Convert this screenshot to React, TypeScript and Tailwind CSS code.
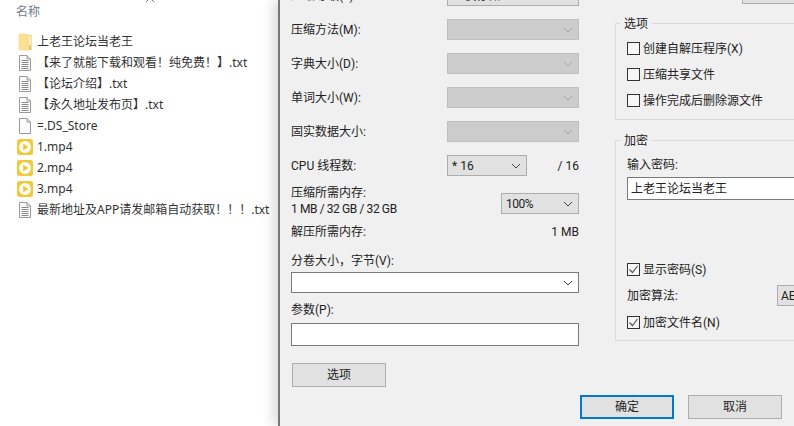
const files = [
  { name: '上老王论坛当老王', icon: 'folder' },
  { name: '【来了就能下载和观看！纯免费！】.txt', icon: 'text' },
  { name: '【论坛介绍】.txt', icon: 'text' },
  { name: '【永久地址发布页】.txt', icon: 'text' },
  { name: '=.DS_Store', icon: 'blank' },
  { name: '1.mp4', icon: 'video' },
  { name: '2.mp4', icon: 'video' },
  { name: '3.mp4', icon: 'video' },
  { name: '最新地址及APP请发邮箱自动获取！！！.txt', icon: 'text' },
]

function FileIcon({ type }: { type: string }) {
  if (type === 'folder') {
    return (
      <svg width="18" height="18" viewBox="0 0 18 18" className="shrink-0">
        <path d="M3 1h8l1 1v15H3z" fill="#ffe08f" stroke="#f3d98e" strokeWidth="0.6" />
        <path d="M12 2h3.5v15H12z" fill="#fbeab8" stroke="#f0d48a" strokeWidth="0.6" />
        <path d="M13 12h2v5h-2z" fill="#e9c566" />
      </svg>
    )
  }
  if (type === 'video') {
    return (
      <svg width="18" height="18" viewBox="0 0 18 18" className="shrink-0">
        <rect x="1" y="1" width="16" height="16" rx="2.5" fill="#edcb3c" />
        <circle cx="9" cy="9" r="6" fill="#fdfaf0" />
        <path d="M7.2 5.8v6.4L12.3 9z" fill="#edc62f" />
      </svg>
    )
  }
  return (
    <svg width="18" height="18" viewBox="0 0 18 18" className="shrink-0">
      <path d="M3.5 1.5h7.5l3.5 3.5v11.5h-11z" fill="#fbfbfb" stroke="#9a9a9a" />
      <path d="M11 1.5V5h3.5" fill="none" stroke="#9a9a9a" />
      {type === 'text' && (
        <path d="M5.5 6.5h7M5.5 8.5h7M5.5 10.5h7M5.5 12.5h7M5.5 14.5h7" stroke="#8a8a8a" />
      )}
    </svg>
  )
}

function Chevron({ color }: { color: string }) {
  return (
    <svg width="10" height="6" viewBox="0 0 10 6" className="shrink-0">
      <path d="M1 1l4 4 4-4" fill="none" stroke={color} strokeWidth="1" />
    </svg>
  )
}

function DisabledSelect() {
  return (
    <div className="flex h-[21px] w-[132px] items-center justify-end border border-[#bfbfbf] bg-[#cccccc] pr-[5px]">
      <Chevron color="#a3a3a3" />
    </div>
  )
}

function Row({ label, children }: { label: string; children: React.ReactNode }) {
  return (
    <div className="flex h-[21px] items-center justify-between">
      <span>{label}</span>
      {children}
    </div>
  )
}

function Checkbox({ label, checked }: { label: string; checked?: boolean }) {
  return (
    <div className="flex h-4 items-center gap-[3px]">
      <span className="flex h-[13px] w-[13px] items-center justify-center border border-[#333333] bg-[#f6f6f6]">
        {checked && (
          <svg width="11" height="11" viewBox="0 0 11 11">
            <path d="M1.5 5.5l3 3 5-6.5" fill="none" stroke="#555555" strokeWidth="1.2" />
          </svg>
        )}
      </span>
      <span className="pt-px">{label}</span>
    </div>
  )
}

export default function App() {
  return (
    <div className="flex h-[426px] w-[794px] overflow-hidden bg-white font-['Noto_Sans','Noto_Sans_CJK_SC',sans-serif] text-[12px] leading-4 text-[#222222]">
      {/* Explorer list */}
      <div className="relative w-[278px] shrink-0">
        <svg width="10" height="6" viewBox="0 0 10 6" className="absolute left-[145px] top-[-3px]">
          <path d="M1 5l4-4 4 4" fill="none" stroke="#7a7a7a" />
        </svg>
        <div className="pl-4 pt-[4px] text-[#6d7b8b]">名称</div>
        <div className="mt-[11px] flex flex-col">
          {files.map((file) => (
            <div key={file.name} className="flex h-[21px] items-center gap-[3px] pl-4 text-[#333333]">
              <FileIcon type={file.icon} />
              <span className="whitespace-nowrap">{file.name}</span>
            </div>
          ))}
        </div>
      </div>

      {/* Dialog */}
      <div className="relative flex w-[516px] shrink-0 flex-col border-l-2 border-[#777777] bg-[#f0f0f0] pl-[11px] pr-[12px] font-['Roboto','Noto_Sans_CJK_SC',sans-serif] shadow-[-6px_0_10px_rgba(0,0,0,0.12)]">
        <div className="flex h-[387px] gap-9">
          {/* Left column */}
          <div className="-mt-[15px] flex w-[288px] shrink-0 flex-col">
            <div className="flex flex-col gap-[13px]">
              <Row label="压缩等级(L):">
                <div className="flex h-[21px] w-[132px] items-center justify-between border border-[#adadad] bg-[#e1e1e1] pl-[7px] pr-[5px]">
                  <span>-&nbsp;&nbsp;仅存储</span>
                  <Chevron color="#a3a3a3" />
                </div>
              </Row>
              <Row label="压缩方法(M):"><DisabledSelect /></Row>
              <Row label="字典大小(D):"><DisabledSelect /></Row>
              <Row label="单词大小(W):"><DisabledSelect /></Row>
              <Row label="固实数据大小:"><DisabledSelect /></Row>
              <Row label="CPU 线程数:">
                <div className="flex w-[132px] items-center justify-between">
                  <div className="flex h-[21px] w-[80px] items-center justify-between border border-[#adadad] bg-[#e1e1e1] pl-[4px] pr-[5px]">
                    <span>* 16</span>
                    <Chevron color="#444444" />
                  </div>
                  <span>/ 16</span>
                </div>
              </Row>
            </div>
            <div className="mt-[9px] flex h-8 justify-between">
              <div>
                <div>压缩所需内存:</div>
                <div className="tracking-[-0.4px]">1 MB / 32 GB / 32 GB</div>
              </div>
              <div className="mt-[8px] flex h-[21px] w-[78px] items-center justify-between border border-[#adadad] bg-[#e1e1e1] pl-[4px] pr-[5px]">
                <span className="tracking-[-0.5px]">100%</span>
                <Chevron color="#444444" />
              </div>
            </div>
            <div className="mt-[7px] flex justify-between">
              <span>解压所需内存:</span>
              <span>1 MB</span>
            </div>
            <div className="mt-[13px]">分卷大小，字节(V):</div>
            <div className="mt-[3px] flex h-[21px] items-center justify-end border border-[#7a7a7a] bg-white pr-[5px]">
              <Chevron color="#444444" />
            </div>
            <div className="mt-[9px]">参数(P):</div>
            <div className="mt-[5px] h-[23px] border border-[#7a7a7a] bg-white" />
            <button className="ml-px mt-[17px] h-6 w-[94px] border border-[#adadad] bg-[#e1e1e1]">选项</button>
          </div>

          {/* Right column */}
          <div className="w-[200px] shrink-0">
            <div className="-mt-[20px] ml-[127px] h-6 w-[94px] border border-[#adadad] bg-[#e1e1e1]" />
            <fieldset className="mt-[11px] border border-[#d9d9d9]">
              <legend className="ml-[4px] px-1 pt-px">选项</legend>
              <div className="flex flex-col gap-[10px] pb-[11px] pl-[11px] pt-[8px]">
                <Checkbox label="创建自解压程序(X)" />
                <Checkbox label="压缩共享文件" />
                <Checkbox label="操作完成后删除源文件" />
              </div>
            </fieldset>
            <fieldset className="mt-3 border border-[#d9d9d9]">
              <legend className="ml-[4px] px-1 pt-px">加密</legend>
              <div className="flex flex-col pb-[10px] pl-[11px] pt-2">
                <div>输入密码:</div>
                <div className="mt-1 flex h-[23px] items-center border border-[#7a7a7a] bg-white pl-[3px]">上老王论坛当老王</div>
                <div className="mt-[61px]"><Checkbox label="显示密码(S)" checked /></div>
                <div className="mt-2 flex h-[21px] items-center">
                  <span className="w-[150px] shrink-0">加密算法:</span>
                  <div className="flex h-[21px] w-[80px] shrink-0 items-center border border-[#adadad] bg-[#e1e1e1] pl-[3px]">AES-256</div>
                </div>
                <div className="mt-2"><Checkbox label="加密文件名(N)" checked /></div>
              </div>
            </fieldset>
          </div>
        </div>

        {/* Dialog buttons */}
        <div className="mt-2 flex justify-end gap-[14px]">
          <button className="h-6 w-[94px] border-2 border-[#0078d7] bg-[#e1e1e1]">确定</button>
          <button className="h-6 w-[94px] border border-[#adadad] bg-[#e1e1e1]">取消</button>
        </div>
      </div>
    </div>
  )
}
